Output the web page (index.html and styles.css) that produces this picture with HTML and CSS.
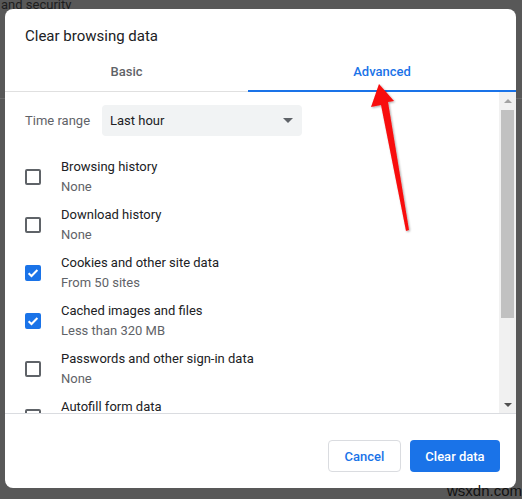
FILE: index.html
```html
<!DOCTYPE html>
<html>
<head>
<meta charset="utf-8">
<link rel="stylesheet" href="styles.css">
</head>
<body>
<div class="backdrop">
  <div class="bg-line bg-top">and security</div>
  <div class="bg-sep"></div>
</div>

<div class="dialog">
  <div class="title">Clear browsing data</div>
  <div class="tabs">
    <div class="tab basic">Basic</div>
    <div class="tab active">Advanced</div>
  </div>
  <div class="body">
    <div class="scroll">
      <div class="range-row">
        <span class="range-label">Time range</span>
        <div class="select">
          <span>Last hour</span>
          <span class="caret"></span>
        </div>
      </div>
      <div class="item">
        <span class="cb"></span>
        <div class="texts"><div class="t1">Browsing history</div><div class="t2">None</div></div>
      </div>
      <div class="item">
        <span class="cb"></span>
        <div class="texts"><div class="t1">Download history</div><div class="t2">None</div></div>
      </div>
      <div class="item">
        <span class="cb checked"><svg viewBox="0 0 16 16" width="16" height="16"><path d="M3.6 8.2 L6.5 11 L12.4 5" fill="none" stroke="#fff" stroke-width="2"/></svg></span>
        <div class="texts"><div class="t1">Cookies and other site data</div><div class="t2">From 50 sites</div></div>
      </div>
      <div class="item">
        <span class="cb checked"><svg viewBox="0 0 16 16" width="16" height="16"><path d="M3.6 8.2 L6.5 11 L12.4 5" fill="none" stroke="#fff" stroke-width="2"/></svg></span>
        <div class="texts"><div class="t1">Cached images and files</div><div class="t2">Less than 320 MB</div></div>
      </div>
      <div class="item">
        <span class="cb"></span>
        <div class="texts"><div class="t1">Passwords and other sign-in data</div><div class="t2">None</div></div>
      </div>
      <div class="item">
        <span class="cb"></span>
        <div class="texts"><div class="t1">Autofill form data</div><div class="t2">None</div></div>
      </div>
    </div>
    <div class="scrollbar">
      <div class="arrow up"></div>
      <div class="track"><div class="thumb"></div></div>
      <div class="arrow down"></div>
    </div>
  </div>
  <div class="footer">
    <button class="btn cancel">Cancel</button>
    <button class="btn primary">Clear data</button>
  </div>
</div>

<div class="watermark">wsxdn.com</div>

<svg class="red-arrow" width="522" height="499" viewBox="0 0 522 499">
  <defs>
    <filter id="sh" x="-50%" y="-50%" width="200%" height="200%">
      <feDropShadow dx="1" dy="1" stdDeviation="1" flood-color="#000" flood-opacity="0.35"/>
    </filter>
  </defs>
  <polygon points="379,84 394,101 388,102 409,230 406,231 381,105 371,107" fill="#f80b0b" filter="url(#sh)"/>
</svg>
</body>
</html>
```

FILE: styles.css
```css
* { box-sizing: border-box; }
html, body { margin: 0; padding: 0; }
body {
  width: 522px;
  height: 499px;
  background: #585858;
  font-family: Roboto, "Liberation Sans", Arial, sans-serif;
  position: relative;
  overflow: hidden;
}

.backdrop {
  display: flex;
  flex-direction: column;
  color: #1e1e1e;
  font-size: 13px;
}
.bg-line { height: 14px; line-height: 14px; white-space: nowrap; }
.bg-top { padding-left: 1px; margin-top: -2px; }
.bg-sep { height: 1px; background: #6a6a6a; margin-top: 86px; }

.dialog {
  position: absolute;
  left: 5px;
  top: 9px;
  width: 511px;
  height: 479px;
  background: #fff;
  border-radius: 8px;
  display: flex;
  flex-direction: column;
  overflow: hidden;
}

.title {
  height: 50px;
  padding: 18px 0 0 20px;
  font-size: 15px;
  color: #202124;
  line-height: 18px;
}

.tabs {
  display: flex;
  height: 33px;
  border-bottom: 1px solid #e0e0e0;
}
.tab {
  text-align: center;
  font-size: 13px;
  font-weight: 500;
  color: #5f6368;
  padding-top: 5px;
  line-height: 16px;
}
.tab.basic { flex: 0 0 243px; }
.tab.active {
  flex: 1;
  color: #1a73e8;
  border-bottom: 2px solid #1a73e8;
  margin-bottom: -1px;
}

.body {
  flex: 0 0 322px;
  display: flex;
  border-bottom: 1px solid #dadce0;
  overflow: hidden;
}
.scroll {
  flex: 1;
  padding: 13px 0 0 20px;
  overflow: hidden;
}
.range-row {
  display: flex;
  align-items: center;
  height: 31px;
  margin-bottom: 17px;
}
.range-label {
  font-size: 13px;
  color: #5f6368;
  width: 77px;
}
.select {
  width: 200px;
  height: 31px;
  background: #f1f3f4;
  border-radius: 4px;
  display: flex;
  align-items: center;
  justify-content: space-between;
  padding: 0 8px 0 8px;
  font-size: 13px;
  color: #202124;
}
.caret {
  width: 0;
  height: 0;
  border-left: 5px solid transparent;
  border-right: 5px solid transparent;
  border-top: 5px solid #5f6368;
  margin-right: 1px;
}

.item {
  display: flex;
  align-items: center;
  height: 48px;
}
.cb {
  width: 16px;
  height: 16px;
  border: 2px solid #5f6368;
  border-radius: 2px;
  margin-right: 20px;
  flex: none;
  display: flex;
  align-items: center;
  justify-content: center;
}
.cb.checked {
  background: #1a73e8;
  border-color: #1a73e8;
}
.cb.checked svg { flex: none; margin: -2px; }
.texts { display: flex; flex-direction: column; }
.t1 { font-size: 13px; color: #202124; line-height: 20px; }
.t2 { font-size: 13px; color: #5f6368; line-height: 20px; }

.scrollbar {
  width: 17px;
  flex: none;
  background: #f1f1f1;
  display: flex;
  flex-direction: column;
}
.arrow {
  height: 17px;
  display: flex;
  align-items: center;
  justify-content: center;
}
.arrow.up::before {
  content: "";
  border-left: 4px solid transparent;
  border-right: 4px solid transparent;
  border-bottom: 4px solid #a3a3a3;
}
.arrow.down::before {
  content: "";
  border-left: 4px solid transparent;
  border-right: 4px solid transparent;
  border-top: 4px solid #505050;
}
.track { flex: 1; padding: 1px 2px 0 2px; }
.thumb { height: 208px; background: #c1c1c1; }

.footer {
  flex: 1;
  display: flex;
  justify-content: flex-end;
  align-items: flex-start;
  gap: 9px;
  padding: 26px 16px 0 0;
}
.btn {
  height: 32px;
  border-radius: 4px;
  font-family: Roboto, "Liberation Sans", Arial, sans-serif;
  font-size: 13px;
  font-weight: 500;
  padding: 0;
  cursor: pointer;
}
.cancel {
  width: 73px;
  background: #fff;
  border: 1px solid #dadce0;
  color: #1a73e8;
}
.primary {
  width: 90px;
  background: #1a73e8;
  border: none;
  color: #fff;
}

.watermark {
  position: absolute;
  left: 447px;
  top: 482px;
  font-size: 15px;
  color: #111;
  font-family: "Liberation Sans", Arial, sans-serif;
}
.red-arrow {
  position: absolute;
  left: 0;
  top: 0;
  pointer-events: none;
}
```
